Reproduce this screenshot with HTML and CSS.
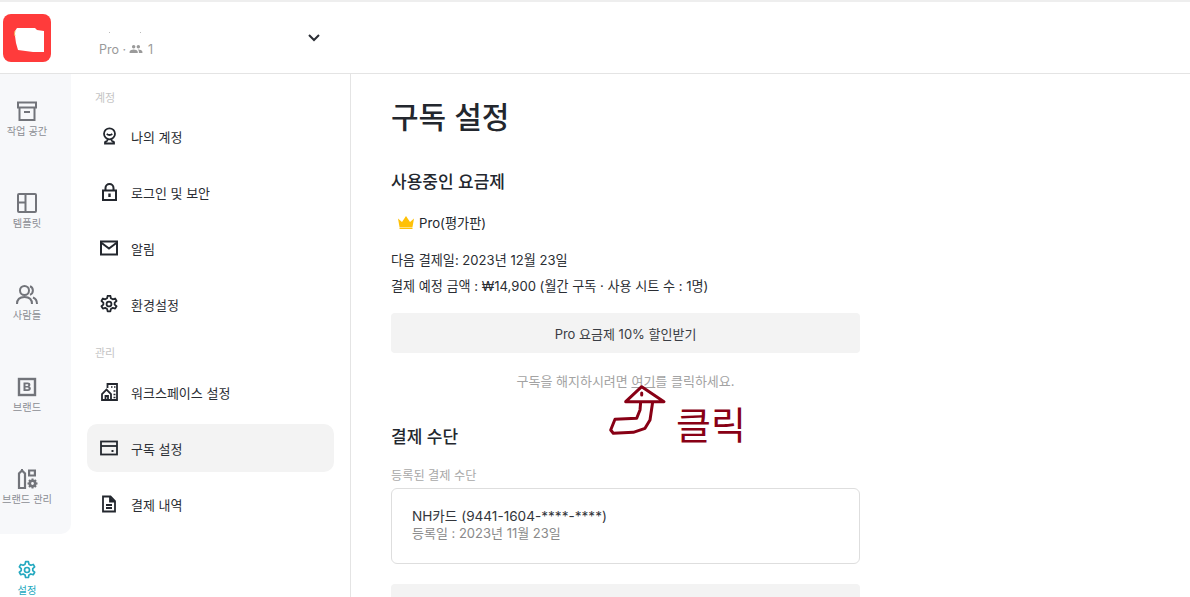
FILE: index.html
```html
<!DOCTYPE html>
<html lang="ko">
<head>
<meta charset="utf-8">
<title>구독 설정</title>
<link rel="stylesheet" href="styles.css">
</head>
<body>
<div class="app">
  <header class="topbar">
    <div class="logo-cell">
      <div class="logo"><svg width="48" height="48" viewBox="0 0 48 48"><path d="M12 17L14 14H32L34 16L41 17V38H30L15 36L13 29L12 22Z" fill="#fff"/><path d="M12 17Q11 20 12 22" stroke="#f5c26b" fill="none"/></svg></div>
    </div>
    <div class="workspace">
      <div class="ws-name"><span class="dot"></span><span class="dot"></span></div>
      <div class="ws-meta">Pro ·
        <svg class="people" width="14" height="14" viewBox="0 0 24 24"><path fill="#9a9a9a" d="M16 11a3 3 0 1 0 0-6 3 3 0 0 0 0 6zm-8 0a3 3 0 1 0 0-6 3 3 0 0 0 0 6zm0 2c-2.300 0-7 1.200-7 3.500V19h14v-2.500C15 14.200 10.300 13 8 13zm8 0h-1c1.200.9 2 2 2 3.500V19h6v-2.500c0-2.300-4.700-3.500-7-3.500z"/></svg>
        <span class="ws-count">1</span></div>
      <svg class="chev" width="14" height="10" viewBox="0 0 14 10"><path d="M2 2l5 5 5-5" fill="none" stroke="#2b2e35" stroke-width="2"/></svg>
    </div>
  </header>
  <div class="body-row">
    <nav class="rail">
      <div class="rail-top">
        <a class="rail-item"><svg width="22" height="22" viewBox="0 0 22 22" fill="none" stroke="#72747a" stroke-width="2"><path d="M2 2.500h18v5H2zM3.500 7.500V20h15V7.500M8 12h6"/></svg><span>작업 공간</span></a>
        <a class="rail-item"><svg width="22" height="22" viewBox="0 0 22 22" fill="none" stroke="#72747a" stroke-width="2"><rect x="2" y="2" width="18" height="18" rx="1"/><path d="M2 10.500h7.500M9.500 2V20"/></svg><span>템플릿</span></a>
        <a class="rail-item"><svg width="22" height="22" viewBox="0 0 22 22" fill="none" stroke="#72747a" stroke-width="2"><circle cx="8.500" cy="6.500" r="4.500"/><path d="M1 20c0-4.500 3-7 7.500-7s7.500 2.500 7.500 7M14 2.300a4.500 4.500 0 0 1 0 8.400M17 13.500c2.500 1 4 3.300 4 6.500"/></svg><span>사람들</span></a>
        <a class="rail-item"><svg width="22" height="22" viewBox="0 0 22 22"><rect x="3" y="3" width="16" height="16" fill="none" stroke="#72747a" stroke-width="2.400"/><path fill="#72747a" fill-rule="evenodd" d="M7.500 6.500h4.200c1.700 0 2.700.9 2.700 2.200 0 .9-.5 1.500-1.100 1.800.9.300 1.500 1 1.500 2 0 1.500-1.100 2.500-2.900 2.500H7.500zm2 1.700v1.700h1.800c.6 0 1-.3 1-.9s-.4-.8-1-.8zm0 3.300v1.800h2c.7 0 1.100-.3 1.100-.9s-.4-.9-1.100-.9z"/></svg><span>브랜드</span></a>
        <a class="rail-item"><svg width="22" height="22" viewBox="0 0 22 22"><path d="M3 20V5.500l3-3 3 3V20z" fill="none" stroke="#72747a" stroke-width="2.200"/><path d="M5 1h2v3H5z" fill="#72747a"/><path fill="#72747a" fill-rule="evenodd" d="M12 1.500h8v7h-8zm2.200 2v3h3.600v-3z"/><circle cx="16.500" cy="15.500" r="2.700" fill="none" stroke="#72747a" stroke-width="2.600"/><path d="M16.500 10.500v2M16.500 18.500v2M11.500 15.500h2M19.500 15.500h2M13 12l1.500 1.500M20 12l-1.500 1.500M13 19l1.500-1.500M20 19l-1.500-1.500" stroke="#72747a" stroke-width="2"/></svg><span>브랜드 관리</span></a>
      </div>
      <a class="rail-item active"><svg width="24" height="24" viewBox="0 0 24 24" fill="none" stroke="#25a9c0" stroke-width="2" stroke-linejoin="round"><circle cx="12" cy="12" r="3"/><path d="M10.300 2h3.400l.6 3 2.300 1.300 2.900-1 1.700 3-2.300 2v2.400l2.300 2-1.700 3-2.900-1-2.300 1.300-.6 3h-3.400l-.6-3-2.300-1.300-2.900 1-1.700-3 2.300-2v-2.400l-2.300-2 1.700-3 2.900 1 2.300-1.300z"/></svg><span>설정</span></a>
    </nav>
    <aside class="subnav">
      <div class="sub-label first">계정</div>
      <ul class="sub-list">
        <li class="sub-item"><svg width="18" height="18" viewBox="0 0 18 18" fill="none" stroke="#23272e" stroke-width="1.800"><circle cx="9.500" cy="6.800" r="5.500"/><path d="M6.800 6.800c.7.900 1.700 1.200 2.700 1.200s2-.3 2.700-1.200M7.500 12.300v1c0 1-1.700 1-2.500 1.800v1.400h9v-1.400c-.8-.8-2.500-.8-2.500-1.800v-1"/></svg>나의 계정</li>
        <li class="sub-item"><svg width="18" height="18" viewBox="0 0 18 18" fill="none" stroke="#23272e" stroke-width="2"><rect x="3" y="7.500" width="13" height="9.500"/><path d="M5.500 7.500V5a4 4 0 0 1 8 0v2.500"/><path d="M9.500 10.500v3.500" stroke-width="2.400"/></svg>로그인 및 보안</li>
        <li class="sub-item"><svg width="18" height="18" viewBox="0 0 18 18" fill="none" stroke="#23272e" stroke-width="2"><rect x="1" y="2.500" width="16" height="13"/><path d="M1 3.500l8 6 8-6"/></svg>알림</li>
        <li class="sub-item"><svg width="18" height="18" viewBox="1 1 22 22" fill="none" stroke="#23272e" stroke-width="2.200" stroke-linejoin="round"><circle cx="12" cy="12" r="3"/><path d="M10.300 2h3.400l.6 3 2.300 1.300 2.900-1 1.700 3-2.300 2v2.400l2.300 2-1.700 3-2.900-1-2.300 1.300-.6 3h-3.400l-.6-3-2.300-1.300-2.900 1-1.700-3 2.300-2v-2.400l-2.300-2 1.700-3 2.900 1 2.300-1.300z"/></svg>환경설정</li>
      </ul>
      <div class="sub-label">관리</div>
      <ul class="sub-list admin">
        <li class="sub-item"><svg width="18" height="18" viewBox="0 0 18 18" fill="none" stroke="#23272e" stroke-width="1.800"><path d="M7.500 5V1h9.500v16H2v-6l4.500-4.500L11 11v6"/><path d="M5.500 17v-4h2.500v4"/><path d="M11 4h1.500M14 4h1.500M13.500 8h2M13.500 11.500h2M13.500 14.500h2" stroke-width="1.700"/></svg>워크스페이스 설정</li>
        <li class="sub-item current"><svg width="18" height="18" viewBox="0 0 18 18" fill="none" stroke="#23272e" stroke-width="1.800"><rect x="1" y="2.500" width="16" height="13"/><path d="M1 7h16"/><path d="M11.500 12h2" stroke-width="2"/></svg>구독 설정</li>
        <li class="sub-item"><svg width="18" height="18" viewBox="0 0 18 18" fill="none" stroke="#23272e" stroke-width="1.800"><path d="M3 1.500h7.500L15 6v10.500H3z"/><path d="M10 2v4.500h5" fill="#23272e"/><path d="M6 10h6M6 13h6"/></svg>결제 내역</li>
      </ul>
    </aside>
    <main class="content">
      <h1 class="page-title">구독 설정</h1>
      <h2 class="sec-title">사용중인 요금제</h2>
      <div class="plan"><svg width="18" height="14" viewBox="0 0 18 14"><path fill="#ffc107" d="M1 3.500l4 3.500 4-6 4 6 4-3.500-1.500 8.500h-13zM2.500 12.500h13V14h-13z"/></svg>Pro(평가판)</div>
      <p class="info first">다음 결제일: 2023년 12월 23일</p>
      <p class="info">결제 예정 금액 : ₩14,900 (월간 구독 · 사용 시트 수 : 1명)</p>
      <button class="wide-btn">Pro 요금제 10% 할인받기</button>
      <p class="cancel">구독을 해지하시려면 <u>여기</u>를 클릭하세요.</p>
      <h2 class="sec-title pay">결제 수단</h2>
      <div class="field-label">등록된 결제 수단</div>
      <div class="card-box">
        <div class="card-name">NH카드 (9441-1604-****-****)</div>
        <div class="card-date">등록일 : 2023년 11월 23일</div>
      </div>
      <div class="wide-btn tail"></div>
    </main>
  </div>
  <div class="note">
    <svg width="60" height="54" viewBox="0 0 60 54" fill="none" stroke="#880015" stroke-width="3" stroke-linejoin="round" stroke-linecap="round"><path d="M17.700 18.700L33.700 3.700 56 18.700zM32.700 18.700L32 27 28.700 35.300 7 36.300 2.700 47 5.300 50.300 25.300 49.300 37 45.300 42 37 44.700 18.700M33.700 10v2"/></svg>
    <span class="note-text">클릭</span>
  </div>
</div>
</body>
</html>
```
FILE: styles.css
```css
* { box-sizing: border-box; }
html, body { margin: 0; height: 597px; overflow: hidden; background: #fff; }
body { font-family: Inter, "Noto Sans CJK KR", sans-serif; color: #23272e; }
.app { position: relative; height: 597px; overflow: hidden; border-top: 2px solid #eeeeee; }
.topbar { display: flex; height: 72px; border-bottom: 1px solid #e4e4e4; }
.logo-cell { width: 71px; padding: 12px 0 0 3px; }
.logo { width: 48px; height: 48px; border-radius: 8px; background: #ff3b3b; }
.logo svg { display: block; }
.workspace { position: relative; width: 279px; padding: 20px 0 0 28px; }
.ws-name { display: flex; gap: 30px; height: 12px; padding-left: 10px; }
.dot { width: 1px; height: 1px; margin-top: 10px; background: #bbb; }
.ws-meta { display: flex; align-items: center; gap: 3px; height: 20px; margin-top: 5px; font-size: 12.500px; color: #9a9a9a; }
.people { margin: 0; }
.ws-count { margin-left: 2px; }
.chev { position: absolute; left: 236px; top: 31px; }
.body-row { display: flex; height: 523px; }
.rail { width: 71px; flex: none; }
.rail-top { height: 460px; background: #f7f8fa; border-bottom-right-radius: 10px; }
.rail-item { display: flex; flex-direction: column; align-items: center; width: 54px; height: 92px; padding-top: 26px; gap: 2px; font-size: 10.250px; line-height: 14px; color: #8c8e94; white-space: nowrap; }
.rail-item.active { height: 63px; padding-top: 26px; gap: 3px; color: #25a9c0; }
.subnav { width: 280px; flex: none; padding: 0 16px; border-right: 1px solid #e4e4e4; }
.sub-label { height: 16px; padding-left: 8px; font-size: 11px; line-height: 16px; color: #c4c4c4; margin-top: 17px; }
.sub-label.first { margin-top: 16px; }
.sub-list { list-style: none; margin: 6px 0 0; padding: 0; display: flex; flex-direction: column; gap: 8px; }
.sub-list.admin { margin-top: 7px; }
.sub-item { display: flex; align-items: center; gap: 13px; height: 48px; padding-left: 13px; border-radius: 10px; font-size: 13px; color: #2a2d33; }
.sub-item.current { background: #f3f3f3; }
.sub-item svg { flex: none; }
.content { width: 510px; padding: 23px 0 0 40px; }
.page-title { margin: 0; font-size: 30px; line-height: 40px; font-weight: 500; color: #23272e; }
.sec-title { margin: 33px 0 0; font-size: 17px; line-height: 24px; font-weight: 500; color: #23272e; }
.sec-title.pay { margin-top: 34px; }
.plan { display: flex; align-items: center; gap: 4px; height: 20px; margin-top: 18px; padding-left: 6px; font-size: 13.200px; }
.info { margin: 0; font-size: 13.100px; line-height: 26px; color: #2a2d33; white-space: nowrap; }
.info.first { margin-top: 15px; }
.wide-btn { display: block; width: 469px; height: 40px; margin-top: 14px; padding: 0; border: 0; border-radius: 4px; background: #f3f3f3; font: inherit; font-size: 13px; color: #3a3d44; }
.cancel { margin: 18px 0 0; text-align: center; width: 469px; font-size: 13px; line-height: 20px; color: #a3a3a3; }
.field-label { margin-top: 19px; font-size: 12.200px; line-height: 16px; color: #a8a8a8; }
.card-box { width: 469px; height: 76px; margin-top: 4px; padding: 19px 20px; border: 1px solid #dedede; border-radius: 6px; }
.card-name { font-size: 13.600px; line-height: 17px; color: #33363c; }
.card-date { font-size: 13px; line-height: 17px; color: #8a8a8a; }
.wide-btn.tail { margin-top: 20px; }
.note { position: absolute; left: 608px; top: 381px; display: flex; align-items: flex-start; }
.note-text { margin: 19px 0 0 8px; font-size: 38px; line-height: 46px; color: #880015; }
```
